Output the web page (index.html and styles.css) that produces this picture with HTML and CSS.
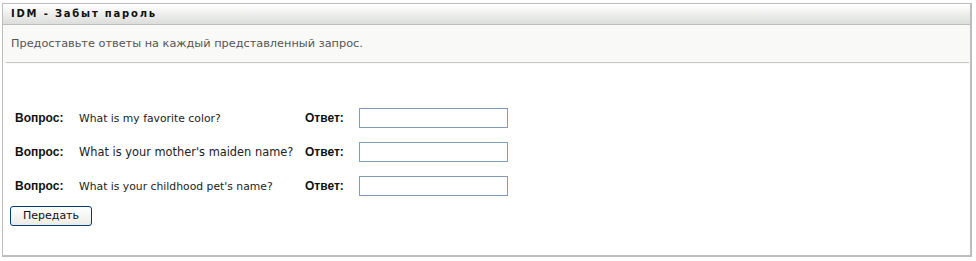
FILE: index.html
```html
<!DOCTYPE html>
<html lang="ru">
<head>
  <meta charset="UTF-8" />
  <title>IDM - Забыт пароль</title>
  <link rel="stylesheet" href="styles.css">
</head>
<body>
  <div class="portlet">
    <div class="portlet-title">IDM - Забыт пароль</div>

    <div class="instructions">
      <p>Предоставьте ответы на каждый представленный запрос.</p>
    </div>

    <form class="challenge-form">
      <table class="questions">
        <tr>
          <td class="label">Вопрос:</td>
          <td class="question">What is my favorite color?</td>
          <td class="label answer">Ответ:</td>
          <td><input type="text" name="answer1"></td>
        </tr>
        <tr>
          <td class="label">Вопрос:</td>
          <td class="question big">What is your mother's maiden name?</td>
          <td class="label answer">Ответ:</td>
          <td><input type="text" name="answer2"></td>
        </tr>
        <tr>
          <td class="label">Вопрос:</td>
          <td class="question">What is your childhood pet's name?</td>
          <td class="label answer">Ответ:</td>
          <td><input type="text" name="answer3"></td>
        </tr>
      </table>

      <button type="submit">Передать</button>
    </form>
  </div>
</body>
</html>
```

FILE: styles.css
```css
* {
  box-sizing: border-box;
}

body {
  margin: 0;
  padding: 3px 0 0 2px;
  font-family: "DejaVu Sans", Verdana, sans-serif;
  background: white;
  color: #333;
}

.portlet {
  width: 970px;
  height: 254px;
  border: 1px solid #bdbdbd;
  border-right-width: 2px;
  border-bottom-width: 2px;
  background: white;
}

.portlet-title {
  height: 21px;
  padding: 0 8px;
  line-height: 20px;
  font-size: 10px;
  font-weight: bold;
  letter-spacing: 1.8px;
  color: #111;
  background: linear-gradient(to bottom, #ffffff, #dcdedb);
  border-bottom: 1px solid #bdbdbd;
}

.instructions {
  height: 39px;
  background: #f9f9f7;
  padding: 0 0 0 3px;
}

.instructions p {
  margin: 0 1px 0 0;
  padding: 0 0 0 5px;
  height: 38px;
  line-height: 38px;
  font-size: 11.3px;
  color: #555;
  border-bottom: 1px solid #c8c8c8;
}

.challenge-form {
  padding: 44px 0 0 7px;
}

.questions {
  border-collapse: collapse;
  margin-bottom: 8px;
}

.questions td {
  padding: 0;
  height: 34px;
  vertical-align: middle;
}

.questions tr:first-child td {
  height: 20px;
}

.questions tr + tr td {
  padding-top: 14px;
}

.label {
  font-family: "Liberation Sans", Arial, sans-serif;
  font-size: 12px;
  font-weight: bold;
  color: #111;
}

.questions td.label:first-child {
  width: 69px;
  padding-left: 5px;
}

.questions td.answer {
  width: 54px;
}

.question {
  width: 226px;
  font-size: 10.8px;
  color: #222;
}

.question.big {
  font-size: 11.4px;
}

input[type="text"] {
  display: block;
  width: 149px;
  height: 20px;
  margin: 0;
  border: 1px solid #7f9db9;
  background: white;
}

button {
  margin: 0;
  width: 82px;
  height: 20px;
  padding: 0;
  font-family: "DejaVu Sans", Verdana, sans-serif;
  font-size: 11px;
  color: #111;
  border: 1px solid #003c74;
  border-radius: 3px;
  background: linear-gradient(to bottom, #ffffff, #ecebe6);
}
```
